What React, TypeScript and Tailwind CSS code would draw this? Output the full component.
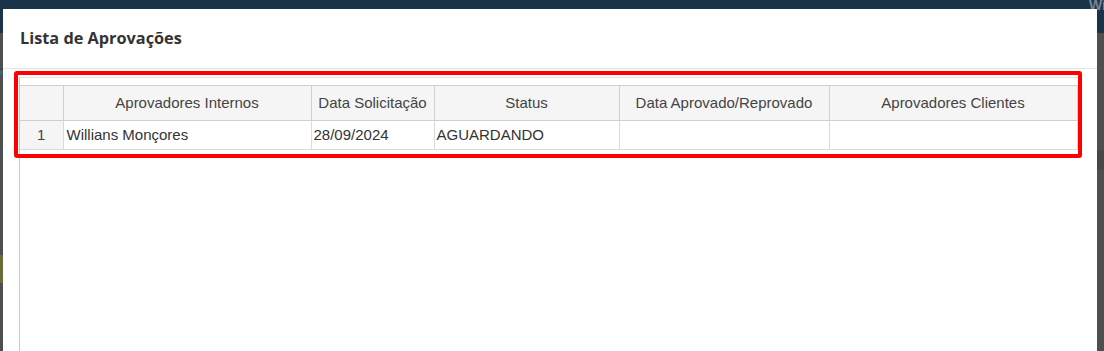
import React from "react";

type Approval = {
  interno: string;
  dataSolicitacao: string;
  status: string;
  dataAprovado: string;
  clientes: string;
};

const approvals: Approval[] = [
  {
    interno: "Willians Monçores",
    dataSolicitacao: "28/09/2024",
    status: "AGUARDANDO",
    dataAprovado: "",
    clientes: "",
  },
];

const columns = [
  { label: "Aprovadores Internos", width: 248 },
  { label: "Data Solicitação", width: 123 },
  { label: "Status", width: 185 },
  { label: "Data Aprovado/Reprovado", width: 210 },
  { label: "Aprovadores Clientes", width: 248 },
];

const ApprovalsModal: React.FC = () => {
  return (
    <div className="absolute left-[3px] top-[9px] w-[1094px] h-[400px] bg-white">
      <div className="h-[60px] flex items-center pl-[17px] border-b border-[#e5e5e5]">
        <h4
          className="text-[16.3px] font-bold text-[#333]"
          style={{ fontFamily: '"Open Sans", "Liberation Sans", sans-serif' }}
        >
          Lista de Aprovações
        </h4>
      </div>
      <div className="pl-[16px] pt-[8px]">
        <div className="h-[300px] w-[1060px] border-l border-t border-l-[#c8c8c8] border-t-[#e6e6e6] pt-[7px]">
          <table
            className="table-fixed border-collapse text-[15px]"
            style={{ fontFamily: '"Liberation Sans", Arial, sans-serif' }}
          >
            <colgroup>
              <col className="w-[43px]" />
              {columns.map((c) => (
                <col key={c.label} style={{ width: c.width }} />
              ))}
            </colgroup>
            <thead>
              <tr className="h-[35px] bg-[#f5f5f5] text-[#444]">
                <th className="border-t border-r border-b border-[#cfcfcf] font-normal"></th>
                {columns.map((c) => (
                  <th
                    key={c.label}
                    className="border-t border-r border-b border-[#cfcfcf] font-normal text-center whitespace-nowrap"
                  >
                    {c.label}
                  </th>
                ))}
              </tr>
            </thead>
            <tbody>
              {approvals.map((a, i) => (
                <tr key={i} className="h-[29px] text-[#333]">
                  <td className="bg-[#f5f5f5] border-r border-b border-[#dadada] text-center text-[#444]">
                    {i + 1}
                  </td>
                  <td className="border-r border-b border-[#dadada] pl-[3px]">{a.interno}</td>
                  <td className="border-r border-b border-[#dadada] pl-[2px]">{a.dataSolicitacao}</td>
                  <td className="border-r border-b border-[#dadada] pl-[2px]">{a.status}</td>
                  <td className="border-r border-b border-[#dadada] pl-[2px]">{a.dataAprovado}</td>
                  <td className="border-r border-b border-[#dadada] pl-[2px]">{a.clientes}</td>
                </tr>
              ))}
            </tbody>
          </table>
        </div>
      </div>
    </div>
  );
};

export default function App() {
  return (
    <div className="relative w-[1104px] h-[351px] overflow-hidden bg-[#4f4f4f]">
      {/* page behind the backdrop */}
      <div className="h-[33px] bg-[#1b3348]"></div>
      <div className="h-[1px] w-[4px] bg-[#3c3c3c] mt-[36px]"></div>
      <div className="h-[5px] w-[2px] bg-[#2b6f7a] mt-[0px]"></div>
      <div className="h-[28px] w-[3px] bg-[#6b6b3a] mt-[180px]"></div>
      <div className="absolute right-0 top-[150px] w-[7px] h-[20px] bg-[#474747]"></div>
      <span
        className="absolute right-[-2px] top-[-5px] text-[14px] font-bold text-[#7b848e]"
        style={{ fontFamily: '"Liberation Sans", Arial, sans-serif' }}
      >
        Wi
      </span>

      <ApprovalsModal />

      {/* highlight frame */}
      <div className="absolute left-[14px] top-[71px] w-[1068px] h-[87px] border-4 border-[#ff0000] rounded-[3px]"></div>
    </div>
  );
}
